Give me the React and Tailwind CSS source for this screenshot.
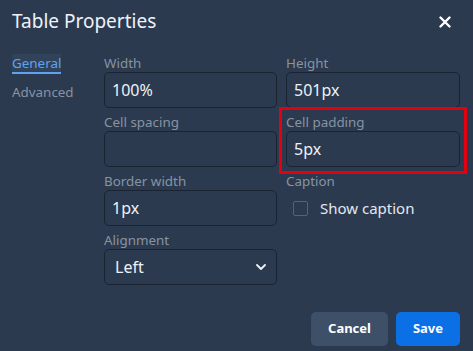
import React from 'react';

const Label = ({ children }) => (
  <div className="h-[23px] flex items-end">
    <span className="text-[13.4px] leading-[18px] text-[#8893a2]">{children}</span>
  </div>
);

const TextInput = ({ value }) => (
  <div className="h-[36px] rounded-[5px] border border-[#1a2331] bg-[#2b3a4f] px-[7px] flex items-center text-[16px] text-[#eef2f7]">
    {value}
  </div>
);

const Field = ({ label, value }) => (
  <div>
    <Label>{label}</Label>
    <TextInput value={value} />
  </div>
);

export default function App() {
  return (
    <div
      className="w-[473px] h-[351px] bg-[#2b3a4f] overflow-hidden"
      style={{ fontFamily: '"Noto Sans", "Open Sans", sans-serif' }}
    >
      <div className="flex items-start justify-between pl-[12px] pr-[22px] pt-[8px] h-[49px]">
        <h1 className="text-[19px] leading-[26px] text-[#eef2f7]">Table Properties</h1>
        <button className="mt-[8px] text-white">
          <svg width="12" height="12" viewBox="0 0 12 12" fill="none" stroke="currentColor" strokeWidth="2.4" strokeLinecap="round">
            <path d="M1.5 1.5 L10.5 10.5 M10.5 1.5 L1.5 10.5" />
          </svg>
        </button>
      </div>

      <div className="flex">
        <div className="w-[104px] pl-[12px] pt-[5px] flex flex-col items-start">
          <div className="bg-[#31435a] text-[13.4px] leading-[18px] text-[#5ea3ef] border-b-2 border-[#5ea3ef]">
            General
          </div>
          <div className="mt-[9px] text-[13.4px] leading-[18px] text-[#8893a2]">Advanced</div>
        </div>

        <div className="grid grid-cols-[173px_174px] gap-x-[9px] gap-y-[0px]">
          <Field label="Width" value="100%" />
          <Field label="Height" value="501px" />
          <Field label="Cell spacing" value="" />
          <div className="relative">
            <div className="absolute -left-[7px] -right-[7px] -top-[1px] -bottom-[7px] border-[3px] border-[#e3000f] pointer-events-none" />
            <Field label="Cell padding" value="5px" />
          </div>
          <Field label="Border width" value="1px" />
          <div>
            <Label>Caption</Label>
            <div className="h-[36px] flex items-center pl-[7px]">
              <div className="w-[15px] h-[15px] rounded-[2px] border border-[#566276]" />
              <span className="ml-[12px] text-[15px] text-[#e3e8ee]">Show caption</span>
            </div>
          </div>
          <div>
            <Label>Alignment</Label>
            <div className="h-[36px] rounded-[5px] border border-[#1a2331] px-[10px] flex items-center justify-between text-[16px] text-[#eef2f7]">
              <span>Left</span>
              <svg width="10" height="6" viewBox="0 0 10 6" fill="none" stroke="currentColor" strokeWidth="1.8" strokeLinecap="round" strokeLinejoin="round">
                <path d="M1 1 L5 5 L9 1" />
              </svg>
            </div>
          </div>
        </div>
      </div>

      <div className="flex justify-end gap-[8px] pr-[13px] mt-[27px]">
        <button className="w-[77px] h-[34px] rounded-[5px] bg-[#3d5068] text-white text-[13px] font-bold">Cancel</button>
        <button className="w-[64px] h-[34px] rounded-[5px] bg-[#0b6fe6] text-white text-[13px] font-bold">Save</button>
      </div>
    </div>
  );
}
